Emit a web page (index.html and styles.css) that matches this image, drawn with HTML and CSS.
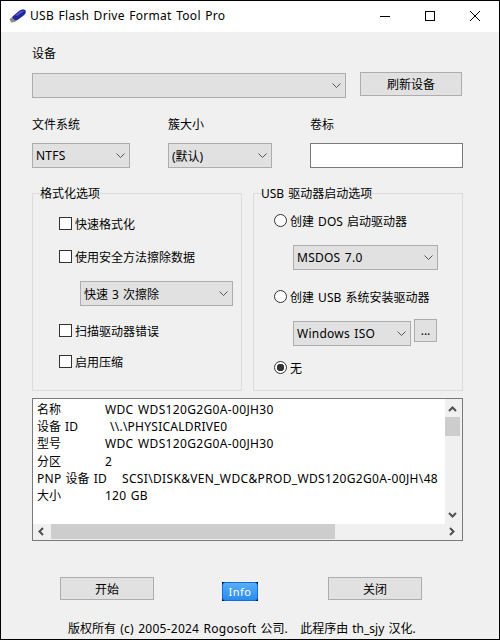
FILE: index.html
```html
<!DOCTYPE html>
<html lang="zh-CN">
<head>
    <meta charset="UTF-8">
    <meta name="viewport" content="width=device-width, initial-scale=1.0">
    <title>USB Flash Drive Format Tool Pro</title>
    <link rel="stylesheet" href="styles.css">
</head>
<body>

    <div class="window">
        <div class="titlebar">
            <svg class="app-icon" width="18" height="14" viewBox="0 0 18 14">
                <path d="M0.500 10 L4 7.500 L8 11 L6 13 L2 13.500 Z" fill="#8c8c8c"/>
                <path d="M3.500 7.500 L10 2 C12 0.500 15.500 0 16.500 1.500 C17.500 3.500 16 5.500 14 7 L8.500 11 C6.500 12 3 10 3.500 7.500 Z" fill="#23279c"/>
                <path d="M6 6.500 L11 2.500 C12.500 1.500 14.500 1.300 15 2.200 L8.500 6.800 Z" fill="#4f55d0"/>
            </svg>
            <span class="app-title">USB Flash Drive Format Tool Pro</span>
            <div class="window-buttons">
                <svg width="10" height="10" viewBox="0 0 10 10"><path d="M0 5.500 H10" stroke="#000" fill="none"/></svg>
                <svg width="10" height="10" viewBox="0 0 10 10"><rect x="0.500" y="0.500" width="9" height="9" stroke="#000" fill="none"/></svg>
                <svg width="10" height="10" viewBox="0 0 10 10"><path d="M0 0 L10 10 M10 0 L0 10" stroke="#000" fill="none"/></svg>
            </div>
        </div>

        <div class="content">
            <div class="label">设备</div>
            <div class="device-row">
                <div class="combo device-combo">
                    <span></span>
                    <svg class="chevron" width="9" height="5" viewBox="0 0 9 5"><path d="M0.500 0.500 L4.500 4.500 L8.500 0.500" stroke="#555" fill="none"/></svg>
                </div>
                <button class="button refresh-btn">刷新设备</button>
            </div>

            <div class="fields">
                <div>
                    <div class="label">文件系统</div>
                    <div class="combo fs-combo">
                        <span class="latin">NTFS</span>
                        <svg class="chevron" width="9" height="5" viewBox="0 0 9 5"><path d="M0.500 0.500 L4.500 4.500 L8.500 0.500" stroke="#555" fill="none"/></svg>
                    </div>
                </div>
                <div>
                    <div class="label">簇大小</div>
                    <div class="combo cluster-combo">
                        <span>(默认)</span>
                        <svg class="chevron" width="9" height="5" viewBox="0 0 9 5"><path d="M0.500 0.500 L4.500 4.500 L8.500 0.500" stroke="#555" fill="none"/></svg>
                    </div>
                </div>
                <div>
                    <div class="label">卷标</div>
                    <input type="text" class="volume-input">
                </div>
            </div>

            <div class="groups">
                <fieldset class="group format-group">
                    <legend>格式化选项</legend>
                    <label class="option opt-quick"><input type="checkbox">快速格式化</label>
                    <label class="option opt-secure"><input type="checkbox">使用安全方法擦除数据</label>
                    <div class="combo wipe-combo">
                        <span>快速 3 次擦除</span>
                        <svg class="chevron" width="9" height="5" viewBox="0 0 9 5"><path d="M0.500 0.500 L4.500 4.500 L8.500 0.500" stroke="#555" fill="none"/></svg>
                    </div>
                    <label class="option opt-scan"><input type="checkbox">扫描驱动器错误</label>
                    <label class="option opt-compress"><input type="checkbox">启用压缩</label>
                </fieldset>

                <fieldset class="group boot-group">
                    <legend>USB 驱动器启动选项</legend>
                    <label class="option opt-dos"><input type="radio" name="boot">创建 DOS 启动驱动器</label>
                    <div class="combo dos-combo">
                        <span class="latin">MSDOS 7.0</span>
                        <svg class="chevron" width="9" height="5" viewBox="0 0 9 5"><path d="M0.500 0.500 L4.500 4.500 L8.500 0.500" stroke="#555" fill="none"/></svg>
                    </div>
                    <label class="option opt-usb"><input type="radio" name="boot">创建 USB 系统安装驱动器</label>
                    <div class="iso-row">
                        <div class="combo iso-combo">
                            <span class="latin">Windows ISO</span>
                            <svg class="chevron" width="9" height="5" viewBox="0 0 9 5"><path d="M0.500 0.500 L4.500 4.500 L8.500 0.500" stroke="#555" fill="none"/></svg>
                        </div>
                        <button class="button browse-btn">...</button>
                    </div>
                    <label class="option opt-none"><input type="radio" name="boot" checked>无</label>
                </fieldset>
            </div>

            <div class="info-box">
                <div class="info-text">
                    <div class="info-line"><span class="info-key">名称</span><span class="wide">WDC WDS120G2G0A-00JH30</span></div>
                    <div class="info-line"><span class="info-key">设备 ID</span><span class="indent-id latin">\\.\PHYSICALDRIVE0</span></div>
                    <div class="info-line"><span class="info-key">型号</span><span class="wide">WDC WDS120G2G0A-00JH30</span></div>
                    <div class="info-line"><span class="info-key">分区</span>2</div>
                    <div class="info-line"><span class="info-key key-wide"><span class="latin">PNP</span> 设备 <span class="latin">ID</span></span><span class="wide">SCSI\DISK&amp;VEN_WDC&amp;PROD_WDS120G2G0A-00JH\48</span></div>
                    <div class="info-line"><span class="info-key">大小</span><span class="latin">120 GB</span></div>
                </div>
                <div class="scroll-v">
                    <svg class="arrow" width="15" height="18" viewBox="0 0 15 18"><path d="M4 12 L7.500 8.500 L11 12" stroke="#505050" stroke-width="2" fill="none"/></svg>
                    <div class="thumb-v"></div>
                    <svg class="arrow arrow-end" width="15" height="17" viewBox="0 0 15 17"><path d="M4 6 L7.500 9.500 L11 6" stroke="#505050" stroke-width="2" fill="none"/></svg>
                </div>
                <div class="scroll-h">
                    <svg class="arrow" width="18" height="15" viewBox="0 0 18 15"><path d="M10 4 L6.500 7.500 L10 11" stroke="#505050" stroke-width="2" fill="none"/></svg>
                    <div class="thumb-h"></div>
                    <svg class="arrow arrow-end" width="18" height="15" viewBox="0 0 18 15"><path d="M8 4 L11.500 7.500 L8 11" stroke="#505050" stroke-width="2" fill="none"/></svg>
                </div>
            </div>

            <div class="actions">
                <button class="button action-btn">开始</button>
                <button class="info-btn"><span class="info-face">Info</span></button>
                <button class="button action-btn close-btn">关闭</button>
            </div>

            <div class="footer">版权所有 <span class="latin">(c) 2005-2024 Rogosoft</span> 公司.&nbsp;&nbsp; 此程序由 th_sjy 汉化.</div>
        </div>
    </div>

</body>
</html>
```

FILE: styles.css
```css
html, body {
    margin: 0;
    padding: 0;
}

body {
    font-family: "Noto Sans", "Noto Sans CJK SC", sans-serif;
    font-size: 12px;
    word-spacing: 1px;
    color: #000;
}

.latin {
    letter-spacing: 0.25px;
}

.wide {
    letter-spacing: 0.35px;
}

.window {
    width: 500px;
    height: 640px;
    box-sizing: border-box;
    border: 1px solid #000;
    background-color: #f0f0f0;
    overflow: hidden;
}

.titlebar {
    height: 31px;
    box-sizing: border-box;
    background-color: #fff;
    display: flex;
    align-items: center;
    padding: 0 0 2px 8px;
}

.app-title {
    margin-left: 3px;
    letter-spacing: 0.3px;
}

.window-buttons {
    margin-left: auto;
    display: flex;
    gap: 35px;
    padding-right: 19px;
}

.content {
    padding: 12px 0 0 31px;
}

.label {
    height: 18px;
    line-height: 20px;
}

.combo {
    height: 25px;
    box-sizing: border-box;
    border: 1px solid #adadad;
    background-color: #e1e1e1;
    display: flex;
    align-items: center;
    justify-content: space-between;
    padding: 0 4px 0 3px;
}

.button {
    box-sizing: border-box;
    border: 1px solid #adadad;
    background-color: #e1e1e1;
    font-family: inherit;
    font-size: 12px;
    color: #000;
    padding: 0;
}

/* wiersz urzadzenia */
.device-row {
    display: flex;
    align-items: flex-start;
    margin-top: 10px;
}

.device-combo {
    width: 314px;
    margin-top: 1px;
}

.refresh-btn {
    width: 102px;
    height: 24px;
    margin-left: 14px;
}

.fields {
    display: grid;
    grid-template-columns: 136px 142px 153px;
    margin-top: 17px;
}

.fields .label {
    margin-bottom: 10px;
}

.fs-combo {
    width: 98px;
}

.cluster-combo {
    width: 104px;
}

.volume-input {
    display: block;
    width: 153px;
    height: 25px;
    box-sizing: border-box;
    border: 1px solid #7a7a7a;
    background-color: #fff;
    margin: 0;
    padding: 0 4px;
}

.groups {
    display: flex;
    gap: 11px;
    margin-top: 16px;
}

.group {
    width: 210px;
    height: 207px;
    box-sizing: border-box;
    margin: 0;
    padding: 0;
    border: 1px solid #dcdcdc;
    display: flex;
    flex-direction: column;
    align-items: flex-start;
}

.group legend {
    padding: 0;
    margin-left: 7px;
    height: 18px;
    line-height: 20px;
}

/* tekst o 1px nizej niz pole wyboru */
.option {
    display: flex;
    align-items: center;
    height: 20px;
    margin-bottom: -2px;
}

.option input {
    appearance: none;
    width: 13px;
    height: 13px;
    box-sizing: border-box;
    margin: 0 3px 2px 0;
    border: 1px solid #333;
    background-color: #fff;
}

.option input[type="radio"] {
    border-radius: 50%;
}

.option input[type="radio"]:checked {
    background: radial-gradient(circle, #333 0 3.5px, #fff 4px);
}

.format-group .option {
    margin-left: 26px;
}

.opt-quick {
    margin-top: 12px;
}

.opt-secure {
    margin-top: 15px;
}

.wipe-combo {
    width: 153px;
    margin: 16px 0 0 47px;
}

.opt-scan {
    margin-top: 15px;
}

.opt-compress {
    margin-top: 13px;
}

.boot-group .option {
    margin-left: 20px;
}

.opt-dos {
    margin-top: 9px;
}

.dos-combo {
    width: 145px;
    margin: 16px 0 0 39px;
}

.opt-usb {
    margin-top: 17px;
}

.iso-row {
    display: flex;
    align-items: flex-start;
    margin: 14px 0 0 39px;
}

.iso-combo {
    width: 118px;
    margin-top: 2px;
}

.browse-btn {
    width: 23px;
    height: 23px;
    margin-left: 3px;
}

.opt-none {
    margin-top: 12px;
}

/* pole z informacjami */
.info-box {
    width: 431px;
    height: 143px;
    box-sizing: border-box;
    margin-top: 7px;
    border: 1px solid #7a7a7a;
    padding: 0 2px 1px 0;
    display: grid;
    grid-template-columns: 412px 15px;
    grid-template-rows: 125px 15px;
}

.info-text {
    background-color: #fff;
    overflow: hidden;
    padding: 2px 0 0 4px;
    white-space: nowrap;
}

.info-line {
    height: 17.2px;
    line-height: 17.2px;
}

.info-key {
    display: inline-block;
    min-width: 68px;
}

.key-wide {
    margin-right: 15px;
}

.indent-id {
    margin-left: 5px;
}

.scroll-v {
    display: flex;
    flex-direction: column;
}

.thumb-v {
    height: 19px;
    background-color: #cdcdcd;
}

.scroll-h {
    grid-column: 1 / 3;
    display: flex;
}

.thumb-h {
    width: 284px;
    background-color: #cdcdcd;
}

.arrow {
    display: block;
    flex: none;
}

.arrow-end {
    margin: auto 0 0 auto;
}

.actions {
    display: flex;
    align-items: flex-start;
    margin: 36px 0 0 28px;
}

.action-btn {
    width: 94px;
    height: 23px;
}

/* czarne rogi widac spod zaokraglonej nakladki */
.info-btn {
    width: 36px;
    height: 19px;
    box-sizing: border-box;
    margin: 5px 0 0 68px;
    padding: 0;
    border: none;
    background-color: #000;
    font-family: inherit;
}

.info-face {
    display: block;
    height: 100%;
    line-height: 18px;
    box-sizing: border-box;
    border: 1px solid #0f6fd8;
    border-radius: 3px;
    background: linear-gradient(#5aaef8, #2a8cf0);
    color: #fff;
    font-size: 11px;
    letter-spacing: 0.5px;
}

.close-btn {
    margin-left: 70px;
}

.footer {
    margin: 19px 0 0 36px;
    height: 18px;
    line-height: 18px;
    white-space: nowrap;
}
```
